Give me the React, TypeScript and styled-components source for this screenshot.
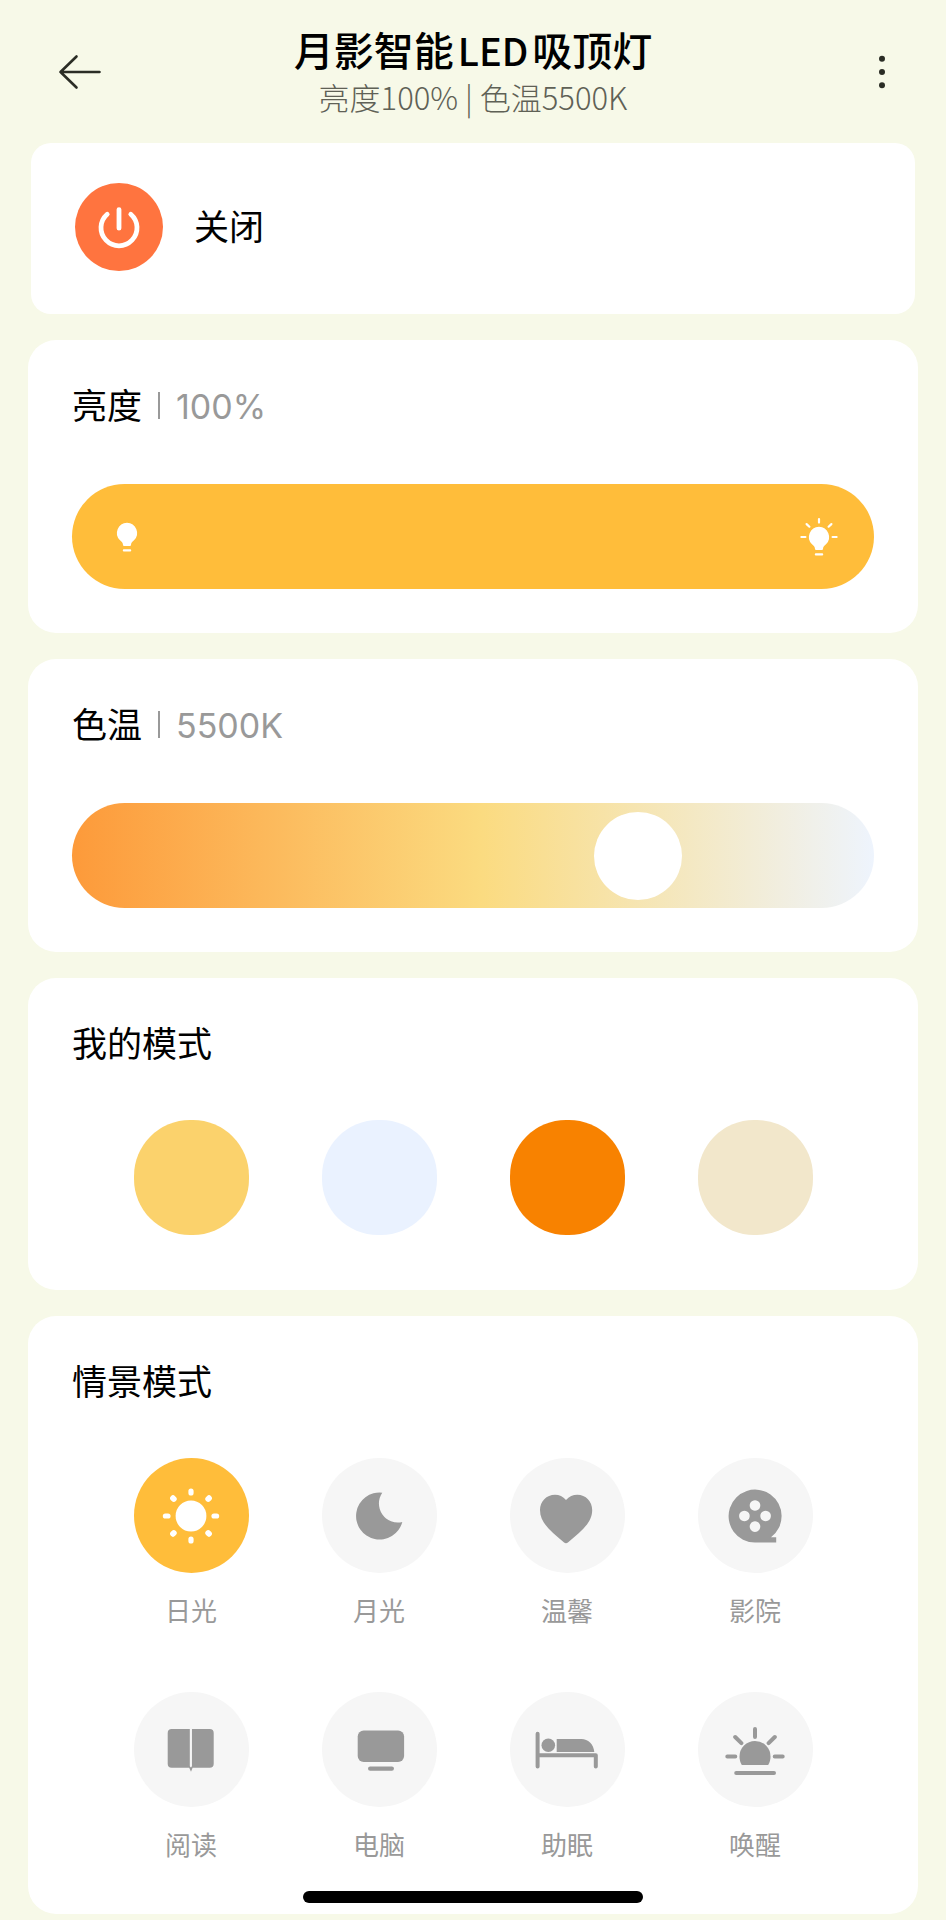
import React, { useState } from "react";
import styled, { createGlobalStyle } from "styled-components";

const GlobalStyle = createGlobalStyle`
  *, *::before, *::after { box-sizing: border-box; }
  body {
    margin: 0;
    background: #f7f9e8;
    color: #000;
    font-family: "Noto Sans CJK SC", "Noto Sans", sans-serif;
  }
  button { font: inherit; color: inherit; border: 0; padding: 0; background: none; cursor: pointer; }
  h1, h2, p { margin: 0; font-weight: 400; }
`;

const Page = styled.div`
  display: flex;
  flex-direction: column;
  padding: 0 28px 6px;
`;

const Header = styled.header`
  display: grid;
  grid-template-columns: 1fr auto 1fr;
  align-items: center;
  padding: 24px 4px 23px;
`;

const IconButton = styled.button`
  display: flex;
  width: 64px;
  height: 80px;
  align-items: center;
  justify-content: center;
`;

const BackButton = styled(IconButton)`
  margin-left: 16px;
`;

const MoreButton = styled(IconButton)`
  justify-self: end;
`;

const Heading = styled.div`
  text-align: center;
`;

const DeviceName = styled.h1`
  font-size: 40px;
  line-height: 50px;
  font-weight: 500;
`;

const Latin = styled.span`
  margin: 0 4px;
  font-size: 38px;
  line-height: 1;
`;

const Status = styled.p`
  font-size: 31px;
  line-height: 46px;
  font-weight: 300;
  color: #5f6156;
`;

const Main = styled.main`
  display: flex;
  flex-direction: column;
  gap: 26px;
`;

const PowerCard = styled.section`
  display: flex;
  align-items: center;
  gap: 31px;
  margin: 0 3px;
  padding: 40px 44px 43px;
  border-radius: 20px;
  background: #fff;
`;

const PowerButton = styled.button`
  display: flex;
  width: 88px;
  height: 88px;
  align-items: center;
  justify-content: center;
  border-radius: 50%;
  background: #ff743f;
`;

const PowerLabel = styled.label`
  padding-bottom: 4px;
  font-size: 35px;
  line-height: 48px;
`;

const Card = styled.section<{ $bottom: number }>`
  padding: 40px 44px ${(p) => p.$bottom}px;
  border-radius: 28px;
  background: #fff;
`;

const CardHead = styled.div`
  display: flex;
  align-items: baseline;
  height: 50px;
`;

const CardTitle = styled.h2`
  font-size: 35px;
  line-height: 48px;
`;

const Divider = styled.span`
  align-self: center;
  width: 2px;
  height: 27px;
  margin: 0 16px;
  background: #999;
`;

const Reading = styled.output`
  font-family: Inter, sans-serif;
  font-size: 34px;
  line-height: 48px;
  color: #999;
`;

const SliderTrack = styled.div<{ $fill: string }>`
  display: grid;
  margin-top: 54px;
  height: 105px;
  border-radius: 53px;
  background: ${(p) => p.$fill};
  overflow: hidden;
`;

const SliderInput = styled.input<{ $thumb: string }>`
  grid-area: 1 / 1;
  appearance: none;
  width: 100%;
  height: 105px;
  margin: 0;
  padding: 0 8px;
  background: transparent;
  cursor: pointer;

  &::-webkit-slider-thumb {
    appearance: none;
    width: 88px;
    height: 88px;
    border-radius: 50%;
    background: ${(p) => p.$thumb};
  }
`;

const SliderEnds = styled.div`
  grid-area: 1 / 1;
  z-index: 1;
  display: flex;
  align-items: center;
  justify-content: space-between;
  padding: 0 35px;
  pointer-events: none;
`;

const ModeGrid = styled.div`
  display: grid;
  grid-template-columns: repeat(4, 1fr);
  row-gap: 63px;
  margin-top: 52px;
  padding: 0 25px;
  justify-items: center;
`;

const Swatch = styled.button<{ $color: string }>`
  width: 115px;
  height: 115px;
  border-radius: 56px;
  background: ${(p) => p.$color};
`;

const SceneButton = styled.button`
  display: flex;
  flex-direction: column;
  align-items: center;
  gap: 19px;
`;

const SceneDisc = styled.span<{ $active: boolean }>`
  display: flex;
  width: 115px;
  height: 115px;
  align-items: center;
  justify-content: center;
  border-radius: 50%;
  background: ${(p) => (p.$active ? "#ffbd3a" : "#f6f6f6")};
  color: ${(p) => (p.$active ? "#fff" : "#999")};
`;

const SceneLabel = styled.span`
  padding-bottom: 1px;
  font-size: 26px;
  line-height: 36px;
  color: #999;
`;

const HomeIndicator = styled.div`
  position: fixed;
  bottom: 17px;
  left: 50%;
  z-index: 2;
  width: 340px;
  height: 12px;
  margin-left: -170px;
  border-radius: 6px;
  background: #000;
`;

const SceneIcon = ({ children }: { children: React.ReactNode }) => (
  <svg width="64" height="64" viewBox="-32 -32 64 64" fill="currentColor" aria-hidden="true">
    {children}
  </svg>
);

const SunIcon = () => (
  <SceneIcon>
    <circle r="15.4" />
    <g stroke="currentColor" strokeWidth="5.2" strokeLinecap="round">
      <path d="M0-25v2M0 23v2M-25.6 0h2.6M23 0h2.6" />
      <path d="M-18-17.8l.8.8M17.2-17l.8-.8M-18 17.8l.8-.8M17.2 17l.8.8" strokeWidth="5.8" />
    </g>
  </SceneIcon>
);

const MoonIcon = () => (
  <SceneIcon>
    <path d="M3.3-23.3A23.5 23.5 0 1 0 23.3 6A19 19 0 0 1 3.3-23.3Z" />
  </SceneIcon>
);

const HeartIcon = () => (
  <SceneIcon>
    <path d="M-1-16C2-19.4 6-21.3 10.3-21.3C18.8-21.3 25.2-14.5 25.2-6C25.2 7 14 15.5 1.2 26.3Q-1 28-3.2 26.3C-16 15.5-27 7-27-6C-27-14.5-20.5-21.3-12-21.3C-7.7-21.3-4-19.4-1-16Z" />
  </SceneIcon>
);

const FilmIcon = () => (
  <SceneIcon>
    <path
      fillRule="evenodd"
      d="M0 26.6A26.5 26.5 0 1 1 16 21.3H21.2V26.6ZM0-15.8a5.3 5.3 0 1 0 .01 0ZM-10.6-5.3a5.3 5.3 0 1 0 .01 0ZM10.6-5.3a5.3 5.3 0 1 0 .01 0ZM0 5.3a5.3 5.3 0 1 0 .01 0Z"
    />
  </SceneIcon>
);

const BookIcon = () => (
  <SceneIcon>
    <path d="M-19.3-21H-1.1V16.6L0 17.6L.8 16.6V-21H18.7a4 4 0 0 1 4 4V13.7a4 4 0 0 1-4 4H1.6L0 21.8L-1.8 17.7H-19.3a4 4 0 0 1-4-4V-17a4 4 0 0 1 4-4Z" />
    <path d="M-1.1-21H.8V16H-1.1Z" fill="#f6f6f6" />
  </SceneIcon>
);

const MonitorIcon = () => (
  <SceneIcon>
    <rect x="-21.3" y="-19.6" width="46.4" height="31.6" rx="6" />
    <rect x="-11" y="16.4" width="26" height="4.4" rx="2.2" />
  </SceneIcon>
);

const BedIcon = () => (
  <SceneIcon>
    <path
      d="M-29.4-16.2V16.4M-29.4 5.2H28.8V16.4"
      fill="none"
      stroke="currentColor"
      strokeWidth="4"
      strokeLinecap="round"
      strokeLinejoin="round"
    />
    <circle cx="-18.7" cy="-4.7" r="6.8" />
    <path d="M-10.3-11H14.5C21-11 26.5-6 27.3 2H-10.3Z" />
  </SceneIcon>
);

const SunriseIcon = () => (
  <SceneIcon>
    <path d="M-13.2 15C-14.8 12.4-15.5 9.5-15.5 6.5A15.5 15.5 0 0 1 15.5 6.5C15.5 9.5 14.8 12.4 13.2 15Z" />
    <path
      d="M0-21V-13M-27.7 6.4H-19.7M19.7 6.4H27.7M-19.8-13L-13.6-6.9M19.8-13L13.6-6.9M-18.8 23H19"
      stroke="currentColor"
      strokeWidth="4"
      strokeLinecap="round"
    />
  </SceneIcon>
);

const BulbShape = () => (
  <>
    <path d="M0-10.2A10.2 10.2 0 0 1 7 7.3C4.8 9.2 4.2 9.8 4 12Q3.9 13 3 13H-3Q-3.9 13-4 12C-4.2 9.8-4.8 9.2-7 7.3A10.2 10.2 0 0 1 0-10.2Z" />
    <rect x="-4.2" y="16.2" width="8.4" height="2.4" rx="1" />
  </>
);

const DimBulbIcon = () => (
  <svg width="40" height="40" viewBox="-20 -20 40 40" fill="#fff" aria-hidden="true">
    <g transform="translate(0 -4)">
      <BulbShape />
    </g>
  </svg>
);

const BrightBulbIcon = () => (
  <svg width="40" height="40" viewBox="-20 -20 40 40" fill="#fff" aria-hidden="true">
    <BulbShape />
    <path
      d="M0-18V-14.4M-17.6 0H-13.6M13.6 0H17.6M-12.4-12.9L-9.6-10.3M12.4-12.9L9.6-10.3"
      stroke="#fff"
      strokeWidth="2.2"
      strokeLinecap="round"
    />
  </svg>
);

const PowerIcon = () => (
  <svg width="48" height="48" viewBox="-24 -24 48 48" fill="none" aria-hidden="true">
    <path d="M-11.8-12.8A18 18 0 1 0 11.8-12.8M0-17.4V1.2" stroke="#fff" strokeWidth="4.8" strokeLinecap="round" />
  </svg>
);

const BackIcon = () => (
  <svg width="44" height="40" viewBox="-22 -20 44 40" fill="none" aria-hidden="true">
    <path
      d="M19.5 0H-19.5M-3.5-15.5L-19.5 0L-3.5 15.5"
      stroke="#2b2d25"
      strokeWidth="2.6"
      strokeLinecap="round"
      strokeLinejoin="round"
    />
  </svg>
);

const MoreIcon = () => (
  <svg width="8" height="36" viewBox="-4 -18 8 36" fill="#2b2d25" aria-hidden="true">
    <circle cy="-13.2" r="3" />
    <circle r="3" />
    <circle cy="13.2" r="3" />
  </svg>
);

const swatches = [
  { name: "暖黄", color: "#fbd26c" },
  { name: "冷白", color: "#eaf2ff" },
  { name: "橙色", color: "#f88200" },
  { name: "米色", color: "#f2e7cb" },
];

const scenes = [
  { name: "日光", Icon: SunIcon },
  { name: "月光", Icon: MoonIcon },
  { name: "温馨", Icon: HeartIcon },
  { name: "影院", Icon: FilmIcon },
  { name: "阅读", Icon: BookIcon },
  { name: "电脑", Icon: MonitorIcon },
  { name: "助眠", Icon: BedIcon },
  { name: "唤醒", Icon: SunriseIcon },
];

export default function App() {
  const [brightness, setBrightness] = useState(100);
  const [temperature, setTemperature] = useState(5500);
  const [scene, setScene] = useState("日光");

  return (
    <>
      <GlobalStyle />
      <Page>
        <Header>
          <BackButton type="button" aria-label="返回">
            <BackIcon />
          </BackButton>
          <Heading>
            <DeviceName>
              月影智能<Latin>LED</Latin>吸顶灯
            </DeviceName>
            <Status>
              亮度{brightness}% | 色温{temperature}K
            </Status>
          </Heading>
          <MoreButton type="button" aria-label="更多">
            <MoreIcon />
          </MoreButton>
        </Header>

        <Main>
          <PowerCard>
            <PowerButton type="button" id="power">
              <PowerIcon />
            </PowerButton>
            <PowerLabel htmlFor="power">关闭</PowerLabel>
          </PowerCard>

          <Card $bottom={44}>
            <CardHead>
              <CardTitle id="brightness-title">亮度</CardTitle>
              <Divider />
              <Reading>{brightness}%</Reading>
            </CardHead>
            <SliderTrack $fill={`linear-gradient(90deg, #ffbd3a ${brightness}%, #f6f6f6 ${brightness}%)`}>
              <SliderInput
                type="range"
                min={1}
                max={100}
                value={brightness}
                onChange={(e) => setBrightness(Number(e.target.value))}
                aria-labelledby="brightness-title"
                $thumb="transparent"
              />
              <SliderEnds>
                <DimBulbIcon />
                <BrightBulbIcon />
              </SliderEnds>
            </SliderTrack>
          </Card>

          <Card $bottom={44}>
            <CardHead>
              <CardTitle id="temperature-title">色温</CardTitle>
              <Divider />
              <Reading>{temperature}K</Reading>
            </CardHead>
            <SliderTrack $fill="linear-gradient(90deg, #fd9a3a 0%, #fbdb80 51%, #eef4fd 100%)">
              <SliderInput
                type="range"
                min={2700}
                max={6500}
                step={100}
                value={temperature}
                onChange={(e) => setTemperature(Number(e.target.value))}
                aria-labelledby="temperature-title"
                $thumb="#fff"
              />
            </SliderTrack>
          </Card>

          <Card $bottom={55}>
            <CardHead>
              <CardTitle>我的模式</CardTitle>
            </CardHead>
            <ModeGrid>
              {swatches.map((s) => (
                <Swatch key={s.name} type="button" aria-label={s.name} $color={s.color} />
              ))}
            </ModeGrid>
          </Card>

          <Card $bottom={51}>
            <CardHead>
              <CardTitle>情景模式</CardTitle>
            </CardHead>
            <ModeGrid>
              {scenes.map(({ name, Icon }) => (
                <SceneButton key={name} type="button" aria-pressed={scene === name} onClick={() => setScene(name)}>
                  <SceneDisc $active={scene === name}>
                    <Icon />
                  </SceneDisc>
                  <SceneLabel>{name}</SceneLabel>
                </SceneButton>
              ))}
            </ModeGrid>
          </Card>
        </Main>
      </Page>
      <HomeIndicator />
    </>
  );
}
